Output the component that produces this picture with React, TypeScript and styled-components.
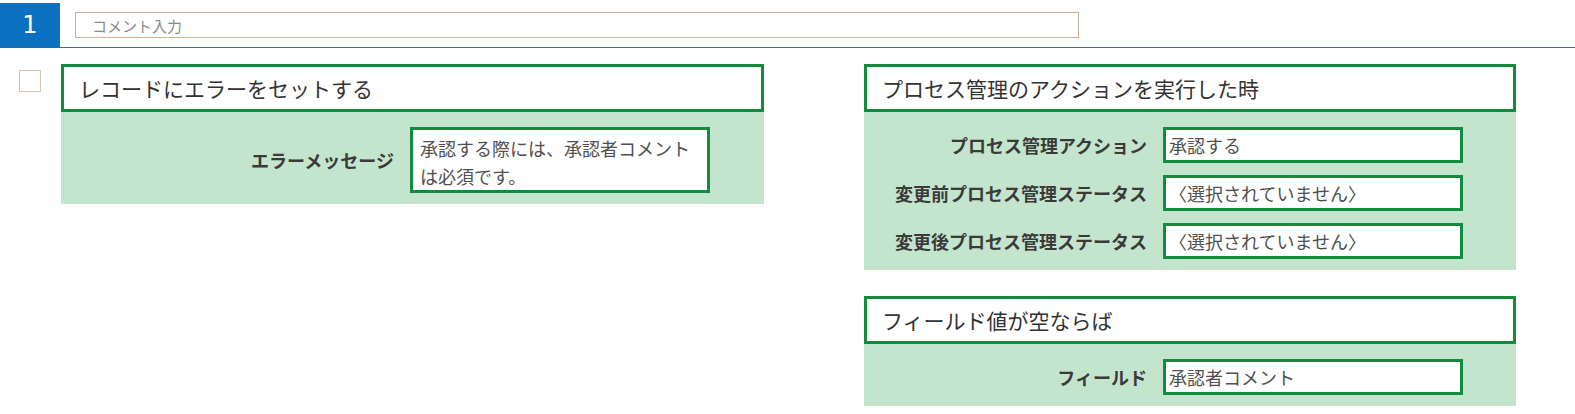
import * as React from "react";
import styled, { createGlobalStyle } from "styled-components";

const GlobalStyle = createGlobalStyle`
  html, body {
    margin: 0;
    padding: 0;
    background: #fff;
  }
  body {
    font-family: "Noto Sans CJK JP", "Noto Sans", sans-serif;
    color: #333;
  }
`;

const Page = styled.div`
  width: 1575px;
  padding-top: 3px;
`;

const Header = styled.div`
  display: flex;
  align-items: flex-start;
  height: 44px;
  border-bottom: 1px solid #1f6ea6;
`;

const NumberBadge = styled.div`
  width: 60px;
  height: 44px;
  display: flex;
  align-items: center;
  justify-content: center;
  background-color: #0a70bf;
  color: #fff;
  font-family: "DejaVu Sans", "Noto Sans", sans-serif;
  font-size: 24px;
  line-height: 1;
`;

const CommentInput = styled.input`
  box-sizing: border-box;
  width: 1004px;
  height: 26px;
  margin: 9px 0 0 15px;
  padding: 0 16px;
  border: 1px solid #c9b393;
  border-radius: 0;
  outline: none;
  font-family: "Noto Sans CJK JP", sans-serif;
  font-size: 15px;
  color: #333;
  &::placeholder {
    color: #8a8a8a;
  }
`;

const Content = styled.div`
  display: flex;
  align-items: flex-start;
  padding: 16px 0 0 19px;
`;

const Checkbox = styled.div`
  box-sizing: border-box;
  width: 22px;
  height: 22px;
  margin-top: 6px;
  border: 1px solid #d6c6ae;
  background: #fff;
`;

const LeftColumn = styled.div`
  margin-left: 20px;
  width: 703px;
`;

const RightColumn = styled.div`
  margin-left: 100px;
  width: 652px;
  display: flex;
  flex-direction: column;
  gap: 26px;
`;

const Card = styled.div`
  display: flex;
  flex-direction: column;
`;

const CardTitle = styled.div`
  box-sizing: border-box;
  height: 48px;
  padding: 0 15px;
  border: 3px solid #138c3d;
  background: #fff;
  font-size: 21px;
  line-height: 42px;
  color: #333;
  white-space: nowrap;
`;

const CardBody = styled.div`
  background-color: #c4e5cd;
  padding: 15px 0 11px;
  display: flex;
  flex-direction: column;
  gap: 12px;
`;

const Row = styled.div<{ $labelWidth: number }>`
  display: grid;
  grid-template-columns: ${(p) => p.$labelWidth}px 300px;
  column-gap: 16px;
  align-items: center;
`;

const Label = styled.div`
  text-align: right;
  font-size: 18px;
  font-weight: bold;
  color: #3a3a3a;
  white-space: nowrap;
`;

const Field = styled.div<{ $multi?: boolean }>`
  box-sizing: border-box;
  border: 3px solid #138c3d;
  background: #fff;
  font-size: 18px;
  color: #505050;
  ${(p) =>
    p.$multi
      ? `
    padding: 4px 7px 0;
    line-height: 28px;
    height: 66px;
  `
      : `
    padding: 0 3px;
    line-height: 30px;
    height: 36px;
    white-space: nowrap;
  `}
`;

const rightRows = [
  { label: "プロセス管理アクション", value: "承認する" },
  { label: "変更前プロセス管理ステータス", value: "〈選択されていません〉" },
  { label: "変更後プロセス管理ステータス", value: "〈選択されていません〉" },
];

export default function App() {
  return (
    <Page>
      <GlobalStyle />
      <Header>
        <NumberBadge>1</NumberBadge>
        <CommentInput placeholder="コメント入力" />
      </Header>
      <Content>
        <Checkbox />
        <LeftColumn>
          <Card>
            <CardTitle>レコードにエラーをセットする</CardTitle>
            <CardBody>
              <Row $labelWidth={333}>
                <Label>エラーメッセージ</Label>
                <Field $multi>承認する際には、承認者コメントは必須です。</Field>
              </Row>
            </CardBody>
          </Card>
        </LeftColumn>
        <RightColumn>
          <Card>
            <CardTitle>プロセス管理のアクションを実行した時</CardTitle>
            <CardBody>
              {rightRows.map((row, index) => (
                <Row key={index} $labelWidth={283}>
                  <Label>{row.label}</Label>
                  <Field>{row.value}</Field>
                </Row>
              ))}
            </CardBody>
          </Card>
          <Card>
            <CardTitle>フィールド値が空ならば</CardTitle>
            <CardBody>
              <Row $labelWidth={283}>
                <Label>フィールド</Label>
                <Field>承認者コメント</Field>
              </Row>
            </CardBody>
          </Card>
        </RightColumn>
      </Content>
    </Page>
  );
}
